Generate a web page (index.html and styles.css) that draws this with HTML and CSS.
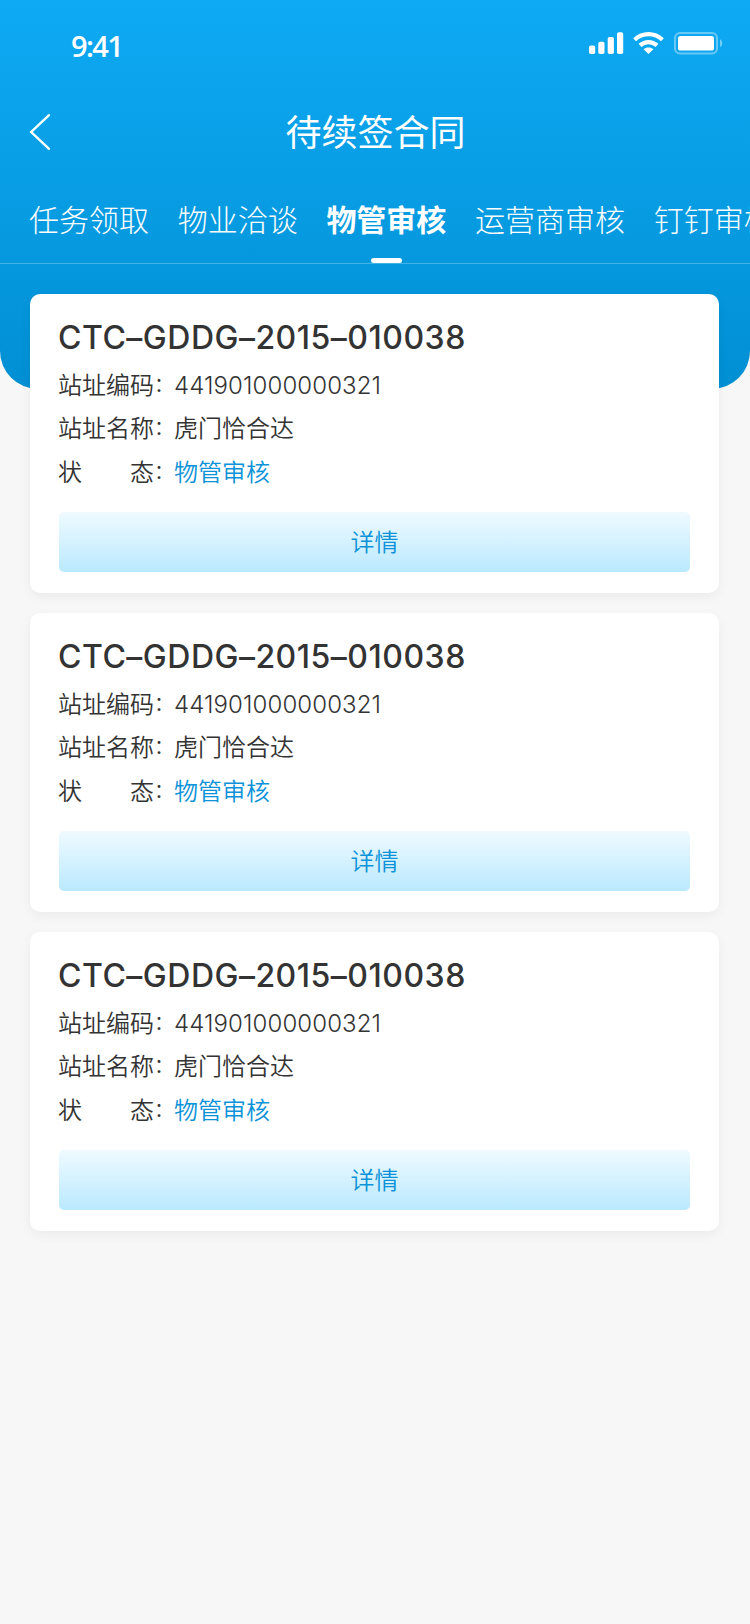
FILE: index.html
```html
<!DOCTYPE html>
<html lang="zh-CN">
<head>
  <meta charset="UTF-8" />
  <meta name="viewport" content="width=device-width, initial-scale=1" />
  <title>待续签合同</title>
  <link rel="stylesheet" href="styles.css">
</head>
<body>
  <header class="header">
    <div class="status-bar">
      <span class="time">9:41</span>
      <svg class="status-icons" width="134" height="23" viewBox="0 0 134 23" fill="#fff">
        <!-- señal -->
        <rect x="0" y="13.5" width="6.2" height="8.5" rx="1.8" />
        <rect x="9.3" y="9.7" width="6.2" height="12.3" rx="1.8" />
        <rect x="18.7" y="5" width="6.2" height="17" rx="1.8" />
        <rect x="28" y="0.2" width="6.2" height="21.8" rx="1.8" />
        <!-- wifi -->
        <g fill="none" stroke="#fff" stroke-width="4.2">
          <path d="M45.6 7.7 C53.5 0.3 65.5 0.3 73.4 7.7" />
          <path d="M51 13.4 C56 8.9 63 8.9 68 13.4" />
        </g>
        <path d="M59.5 22 L54.6 17.2 C57.4 14.9 61.6 14.9 64.4 17.2 Z" />
        <!-- bateria -->
        <rect x="86" y="1" width="42" height="20.6" rx="5" fill="none" stroke="#fff" stroke-width="2" opacity="0.38" />
        <rect x="89" y="4" width="36" height="14.6" rx="2.6" />
        <path d="M131 7.2 C134 8.7 134 13.7 131 15.2 Z" opacity="0.42" />
      </svg>
    </div>

    <div class="nav-bar">
      <svg class="back" width="24" height="38" viewBox="0 0 24 38">
        <path d="M20 2.2 L2.2 19 L20 35.8" fill="none" stroke="#fff" stroke-width="2.4" stroke-linecap="round" />
      </svg>
      <h1>待续签合同</h1>
    </div>

    <nav class="tabs">
      <a class="tab">任务领取</a>
      <a class="tab">物业洽谈</a>
      <a class="tab active">物管审核</a>
      <a class="tab">运营商审核</a>
      <a class="tab">钉钉审核</a>
    </nav>
  </header>

  <main class="lista">
    <section class="card">
      <h2>CTC–GDDG–2015–010038</h2>
      <div class="campo">
        <span class="label">站址编码</span><span class="colon">：</span><span class="numero">441901000000321</span>
      </div>
      <div class="campo">
        <span class="label">站址名称</span><span class="colon">：</span><span>虎门恰合达</span>
      </div>
      <div class="campo">
        <span class="label"><span>状</span><span>态</span></span><span class="colon">：</span><span class="estado">物管审核</span>
      </div>
      <button>详情</button>
    </section>

    <section class="card">
      <h2>CTC–GDDG–2015–010038</h2>
      <div class="campo">
        <span class="label">站址编码</span><span class="colon">：</span><span class="numero">441901000000321</span>
      </div>
      <div class="campo">
        <span class="label">站址名称</span><span class="colon">：</span><span>虎门恰合达</span>
      </div>
      <div class="campo">
        <span class="label"><span>状</span><span>态</span></span><span class="colon">：</span><span class="estado">物管审核</span>
      </div>
      <button>详情</button>
    </section>

    <section class="card">
      <h2>CTC–GDDG–2015–010038</h2>
      <div class="campo">
        <span class="label">站址编码</span><span class="colon">：</span><span class="numero">441901000000321</span>
      </div>
      <div class="campo">
        <span class="label">站址名称</span><span class="colon">：</span><span>虎门恰合达</span>
      </div>
      <div class="campo">
        <span class="label"><span>状</span><span>态</span></span><span class="colon">：</span><span class="estado">物管审核</span>
      </div>
      <button>详情</button>
    </section>
  </main>
</body>
</html>
```
FILE: styles.css
```css
* {
  box-sizing: border-box;
}

body {
  margin: 0;
  min-height: 1624px;
  background: #f7f7f7;
  color: #333;
  font-family: "Noto Sans CJK SC", sans-serif;
  overflow-x: hidden;
}

.header {
  height: 389px;
  background: linear-gradient(180deg, #0eaaf4 0%, #018fd3 100%);
  border-radius: 0 0 38px 38px;
  color: #fff;
}

.status-bar {
  height: 90px;
  padding: 31px 27px 0 71px;
  display: flex;
  justify-content: space-between;
  align-items: flex-start;
}

.time {
  font-family: "Open Sans", sans-serif;
  font-size: 29px;
  font-weight: 600;
  line-height: 30px;
  letter-spacing: -1.6px;
}

.status-icons {
  display: block;
  margin-top: 1px;
}

.nav-bar {
  height: 84px;
  padding: 0 28px 0 29px;
  display: grid;
  grid-template-columns: 24px 1fr 24px;
  align-items: center;
}

.nav-bar h1 {
  margin: 0;
  padding-bottom: 4px;
  font-size: 36px;
  font-weight: 400;
  line-height: 50px;
  text-align: center;
}

.tabs {
  height: 90px;
  padding-left: 29px;
  display: flex;
  gap: 28.7px;
  overflow: hidden;
  border-bottom: 1px solid rgb(255 255 255 / 0.25);
}

.tab {
  flex: none;
  display: flex;
  flex-direction: column;
  justify-content: space-between;
  align-items: center;
  padding-top: 22px;
  font-size: 30px;
  font-weight: 300;
  line-height: 44px;
}

.tab.active {
  font-weight: 700;
}

.tab.active::after {
  content: "";
  width: 31px;
  height: 5px;
  border-radius: 3px;
  background: #fff;
}

.lista {
  margin-top: -95px;
  padding: 0 31px 0 30px;
  display: flex;
  flex-direction: column;
  gap: 20px;
}

.card {
  height: 299px;
  padding: 22px 29px 21px 28px;
  display: flex;
  flex-direction: column;
  background: #fff;
  border-radius: 10px;
  box-shadow: 0 4px 12px rgb(0 0 0 / 0.05);
}

.card h2 {
  margin: 0 0 2px;
  font-family: Inter, sans-serif;
  font-size: 32px;
  font-weight: 500;
  line-height: 44px;
  letter-spacing: 0.5px;
  white-space: nowrap;
}

.campo {
  height: 43px;
  display: flex;
  align-items: center;
  font-size: 24px;
  font-weight: 350;
  line-height: 36px;
}

.campo:nth-of-type(3) {
  margin-top: 1px;
}

.label {
  width: 96px;
  display: flex;
  justify-content: space-between;
}

.colon {
  width: 20px;
  padding-top: 1px;
  font-size: 20px;
}

.numero {
  padding-top: 4px;
  font-family: Inter, sans-serif;
  font-weight: 300;
  letter-spacing: 0.1px;
}

.estado {
  color: #0b92d8;
}

button {
  width: auto;
  height: 60px;
  margin: auto 0 0 1px;
  padding: 0 0 3px;
  border: none;
  border-radius: 5px;
  background: linear-gradient(180deg, #effaff, #bae9ff);
  color: #0b92d8;
  font-family: inherit;
  font-size: 24px;
  font-weight: 350;
}
```
